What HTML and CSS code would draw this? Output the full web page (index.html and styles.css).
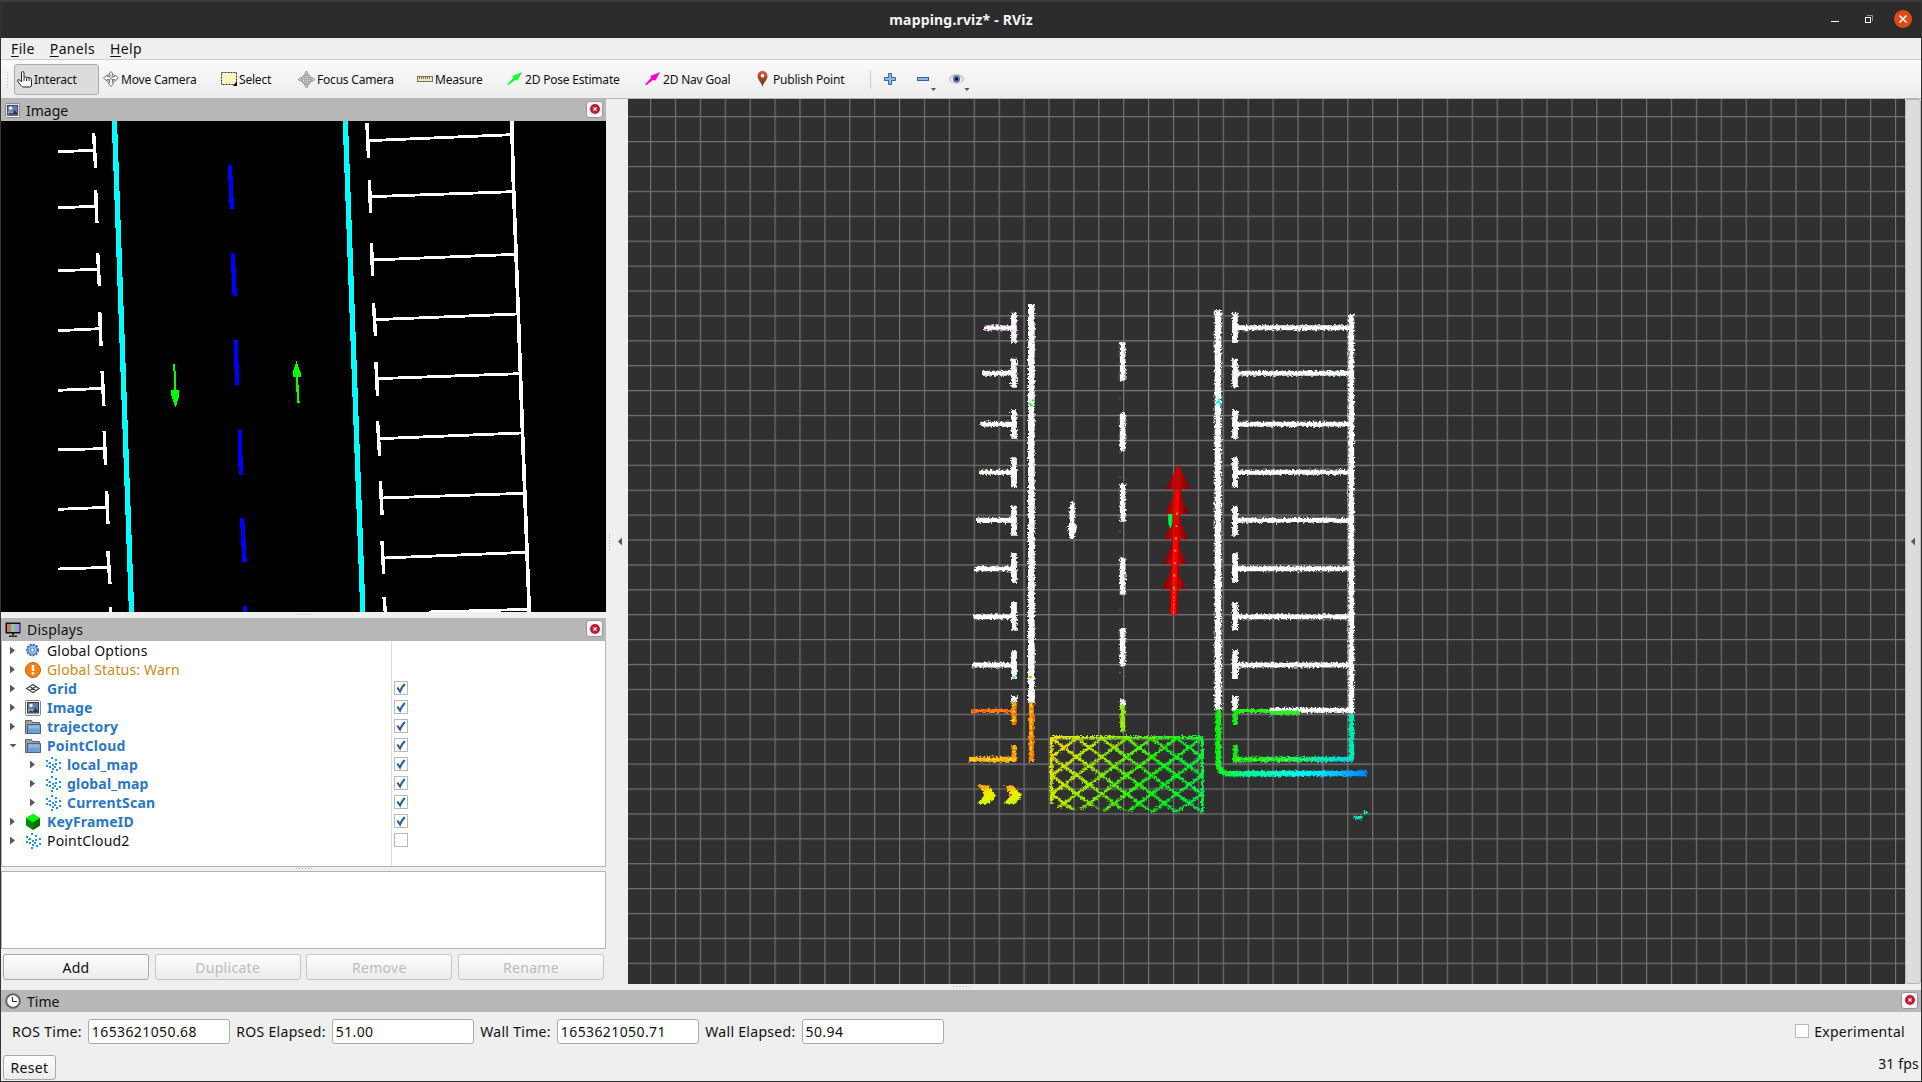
FILE: index.html
```html
<!DOCTYPE html>
<html lang="en">
<head>
<meta charset="utf-8">
<title>mapping.rviz* - RViz</title>
<link rel="stylesheet" href="styles.css">
</head>
<body>
<svg class="sprite" width="0" height="0">
  <symbol id="close" viewBox="0 0 10 10"><circle cx="5" cy="5" r="5" fill="#c61a32"/><path d="M3.4 3.4l3.2 3.2M6.6 3.4L3.4 6.6" stroke="#fff" stroke-width="1.2"/></symbol>
  <symbol id="picture" viewBox="0 0 16 16"><rect x=".5" y=".5" width="15" height="15" rx="1" fill="#f4f4f2" stroke="#85857f"/><rect x="2.5" y="2.5" width="11" height="10.500" fill="#5d7fac" stroke="#2c3b58"/><path d="M3 9h10v3.500H3z" fill="#8ea3bd"/><circle cx="6" cy="5.500" r="1.800" fill="#fdfbd0"/><path d="M3 12.500l2.500-2 2.500 1 2-4 3 3v2z" fill="#2e3a50"/></symbol>
  <symbol id="folder" viewBox="0 0 16 16"><path d="M.5 14.500v-13h6l1 2h7v11z" fill="#a0a09a" stroke="#62625e"/><path d="M2.500 14.500v-9h13v9z" fill="#729fcf" stroke="#3465a4"/><path d="M3.500 6.500h11v3h-11z" fill="#94b8df"/></symbol>
  <symbol id="cloud" viewBox="0 0 16 16"><path fill="#1c94ef" d="M6 0h2v2H6zM1 3h2v2H1zM4 5h2v2H4zM10 2h2v2h-2zM14 5h2v2h-2zM10 6h2v2h-2zM7 7h2v2H7zM1 8h2v2H1zM4 9h2v2H4zM9 9h2v2H9zM14 10h2v2h-2zM7 11h2v2H7zM11 12h2v2h-2zM6 14h2v2H6zM3 6h1v1H3z"/></symbol>
  <symbol id="check" viewBox="0 0 14 14"><path d="M3.300 6.500l2.700 4Q7.500 6.500 10.800 3" fill="none" stroke="#24609f" stroke-width="2.100"/></symbol>
</svg>
<div class="window">
  <header class="titlebar">
    <h1 class="title">mapping.rviz* - RViz</h1>
    <div class="controls">
      <svg width="9" height="9"><path d="M0 6.500h8" stroke="#fff"/></svg>
      <svg width="9" height="9"><rect x=".5" y="2.500" width="5" height="5" fill="none" stroke="#fff"/><path d="M2 .5h5.500V6" fill="none" stroke="#8c8c8c"/></svg>
      <svg width="18" height="18"><circle cx="9" cy="9" r="9" fill="#e04a17"/><path d="M5.500 5.500l7 7m0-7l-7 7" stroke="#fff" stroke-width="1.500"/></svg>
    </div>
  </header>

  <nav class="menubar">
    <span><u>F</u>ile</span><span><u>P</u>anels</span><span><u>H</u>elp</span>
  </nav>

  <div class="toolbar">
    <i class="grip"></i>
    <button class="tool active"><svg width="16" height="17" viewBox="0 0 16 17"><path d="M4.500 9V2q0-1.500 1.200-1.500T7 2v4.500q1.300-1.200 2.500 0 1.500-.8 2.500.3 2.500-.3 2.500 1.700V14q0 2-2 2h-6q-1.500 0-2.500-1.500L.5 10q0-2 2-1.200L4.500 11zM7 7v3m2.500-3v3M12 7v3" fill="#fff" stroke="#222"/></svg><span>Interact</span></button>
    <button class="tool"><svg width="16" height="16" viewBox="0 0 16 16"><path d="M8 .5l2.500 3H9v2h3V4l3.500 3L12 10V8.500H9.500V12h1.500L8 15.500 5 12h1.500V8.500H4V10L.5 7 4 4v1.500h3v-2H5.500z" fill="#fff" stroke="#777"/><path d="M4 4l8 7m0-7l-8 7" stroke="#888"/></svg><span>Move Camera</span></button>
    <button class="tool"><svg width="16" height="14" viewBox="0 0 16 14"><rect x=".5" y=".5" width="15" height="12" fill="#fdf5c0" stroke="#333" stroke-dasharray="2 1"/><path d="M16 9v5h-4z"/></svg><span>Select</span></button>
    <button class="tool"><svg width="17" height="17" viewBox="0 0 17 17"><circle cx="8.500" cy="8.500" r="5" fill="#ddd" stroke="#888"/><path d="M8.500 1v15M1 8.500h15M6.500 4v9M10.500 4v9M4 6.500h9M4 10.500h9" stroke="#999" stroke-width=".7"/><path d="M8.500 0l1.500 2v2H7V2zm0 17l1.500-2v-2H7v2zM0 8.500L2 7h2v3H2zm17 0L15 7h-2v3h2z" fill="#ccc" stroke="#888" stroke-width=".8"/></svg><span>Focus Camera</span></button>
    <button class="tool"><svg width="16" height="8" viewBox="0 0 16 8"><rect x=".5" y="1.500" width="15" height="5" fill="#eee8b8" stroke="#77735f"/><path d="M2.500 2v2m2-2v2m2-2v2m2-2v2m2-2v2m2-2v2" stroke="#777"/></svg><span>Measure</span></button>
    <button class="tool"><svg width="16" height="14" viewBox="0 0 16 14"><path d="M0 12.500L6 6 5.500 4 15 0 10.500 8.500 8 8l-6.500 5z" fill="#1f3"/></svg><span>2D Pose Estimate</span></button>
    <button class="tool"><svg width="16" height="14" viewBox="0 0 16 14"><path d="M0 12.500L6 6 5.500 4 15 0 10.500 8.500 8 8l-6.500 5z" fill="#f0c"/></svg><span>2D Nav Goal</span></button>
    <button class="tool pin"><svg width="11" height="16" viewBox="0 0 11 16"><defs><linearGradient id="pin" x1="0" y1="0" x2="0" y2="1"><stop stop-color="#e2583b"/><stop offset="1" stop-color="#5a3213"/></linearGradient></defs><path d="M5.500 16C4.500 11 .5 9 .5 5a5 5 0 0 1 10 0c0 4-4 6-5 11z" fill="url(#pin)"/><circle cx="5.500" cy="4.700" r="1.800" fill="#fff"/></svg><span>Publish Point</span></button>
    <i class="sep"></i>
    <svg class="plus" width="13" height="13"><path d="M4.500.5h3v4h4v3h-4v4h-3v-4h-4v-3h4z" fill="#8fb7e2" stroke="#3465a4"/></svg>
    <svg class="minus" width="32" height="20"><rect x=".5" y="8.500" width="11" height="3" fill="#8fb7e2" stroke="#3465a4"/><path d="M14 19h5l-2.500 3z" fill="#555"/></svg>
    <svg class="eye" width="22" height="20"><ellipse cx="7.500" cy="10" rx="7.500" ry="5" fill="#c9c9c9"/><ellipse cx="7.500" cy="10.500" rx="6" ry="3.500" fill="#eee"/><circle cx="7.500" cy="10" r="3.700" fill="#6478b8"/><circle cx="7.500" cy="10" r="1.700" fill="#112"/><path d="M15.500 19h5L18 22z" fill="#555"/></svg>
  </div>

  <main class="workspace">
    <aside class="docks">
      <section>
        <h2 class="dock-title"><svg width="15" height="15"><use href="#picture"/></svg><span>Image</span><b class="close"><svg width="10" height="10"><use href="#close"/></svg></b></h2>
        <svg class="camera" viewBox="2 63 1483 1473" preserveAspectRatio="none" shape-rendering="crispEdges" fill="none">
          <path stroke="#0ff" stroke-width="13" d="M280 63L322 1536M846 63L889 1536"/>
          <path stroke="#00f" stroke-width="10.500" d="M563 195L568 327M570 459L575 588M577 720L581 854M587 990L590 1125M593 1254L599 1385M600 1518V1536"/>
          <path stroke="#fff" stroke-width="8.500" d="M229 99L234 204M234 270L237 369M239 459L243 557M244 636L247 738M250 813L254 917M255 993L258 1094M261 1173L264 1272M264 1353L269 1452M270 1521V1536M899 69L903 174M905 240L908 339M910 429L913 528M915 609L920 708M921 786L925 888M925 963L930 1067M932 1143L936 1245M936 1323L940 1421M941 1491L944 1536"/>
          <path stroke="#fff" stroke-width="8.500" d="M142 155L230 151M142 323L235 319M142 512L240 508M142 692L245 686M142 871L251 865M142 1049L256 1046M142 1228L262 1222M142 1407L266 1402M901 122L1255 104M907 290L1259 275M911 480L1263 463M918 659L1267 642M923 836L1274 821M929 1016L1278 999M935 1194L1283 1180M940 1374L1289 1357M1050 1536L1297 1528"/>
          <path stroke="#fff" stroke-width="9" d="M1254 63L1258 250L1270 640L1281 1020L1297 1536"/>
          <path fill="#0f0" d="M424 792h5l3 78h7v15l-8 36h-2l-10-36v-15h8zM726 783l11 37v10h-7l4 79h-6l-4-79h-7v-13z"/>
        </svg>
      </section>
      <i class="hgrip"></i>
      <section>
        <h2 class="dock-title displays"><svg width="17" height="17" viewBox="0 0 17 17"><path d="M.5 1.500h15v11H.5z" fill="#111"/><path d="M2 3h4v8H2z" fill="#c77"/><path d="M6 3h4v8H6z" fill="#8c8"/><path d="M10 3h4.500v8H10z" fill="#99e"/><path d="M7 12h2v2H7zM4 14.500h8v1.500H4z" fill="#222"/></svg><span>Displays</span><b class="close"><svg width="10" height="10"><use href="#close"/></svg></b></h2>
        <ul class="tree">
          <li><i class="arrow"></i><svg width="16" height="16"><circle cx="7.500" cy="7" r="5.500" fill="#a5c3e6" stroke="#3d70b2" stroke-width="2" stroke-dasharray="2 1.200"/><circle cx="7.500" cy="7" r="4.600" fill="#a5c3e6" stroke="#4a7ab8"/><circle cx="7.500" cy="7" r="2" fill="#e8f0fa" stroke="#4a7ab8"/></svg><span>Global Options</span></li>
          <li class="warn"><i class="arrow"></i><svg width="16" height="16"><circle cx="8" cy="8" r="7.500" fill="#f5820d" stroke="#c8610a"/><path d="M8 3v6" stroke="#fff" stroke-width="2.400"/><circle cx="8" cy="11.500" r="1.400" fill="#fff"/></svg><span>Global Status: Warn</span></li>
          <li class="on"><i class="arrow"></i><svg width="16" height="16"><path d="M1.500 7.500L8 3.500l6 4-6 4zM4.700 5.500l6.300 4M11 5.500l-6.300 4" fill="none" stroke="#444" stroke-width="1.200"/></svg><span>Grid</span><b class="box"><svg width="14" height="14"><use href="#check"/></svg></b></li>
          <li class="on"><i class="arrow"></i><svg width="16" height="16"><use href="#picture"/></svg><span>Image</span><b class="box"><svg width="14" height="14"><use href="#check"/></svg></b></li>
          <li class="on"><i class="arrow"></i><svg width="16" height="16"><use href="#folder"/></svg><span>trajectory</span><b class="box"><svg width="14" height="14"><use href="#check"/></svg></b></li>
          <li class="on"><i class="arrow open"></i><svg width="16" height="16"><use href="#folder"/></svg><span>PointCloud</span><b class="box"><svg width="14" height="14"><use href="#check"/></svg></b></li>
          <li class="on child"><i class="arrow"></i><svg width="16" height="16"><use href="#cloud"/></svg><span>local_map</span><b class="box"><svg width="14" height="14"><use href="#check"/></svg></b></li>
          <li class="on child"><i class="arrow"></i><svg width="16" height="16"><use href="#cloud"/></svg><span>global_map</span><b class="box"><svg width="14" height="14"><use href="#check"/></svg></b></li>
          <li class="on child"><i class="arrow"></i><svg width="16" height="16"><use href="#cloud"/></svg><span>CurrentScan</span><b class="box"><svg width="14" height="14"><use href="#check"/></svg></b></li>
          <li class="on"><i class="arrow"></i><svg width="16" height="16"><path d="M8 0l7 4v7.500L8 16l-7-4.500V4z" fill="#058a05"/><path d="M8 0l7 4-7 4.500L1 4z" fill="#0f0"/><path d="M8 8.500l7-4.500v7.500L8 16z" fill="#017001"/></svg><span>KeyFrameID</span><b class="box"><svg width="14" height="14"><use href="#check"/></svg></b></li>
          <li><i class="arrow"></i><svg width="16" height="16"><use href="#cloud"/></svg><span>PointCloud2</span><b class="box"></b></li>
        </ul>
        <i class="hgrip tight"></i>
        <div class="description"></div>
        <div class="actions">
          <button class="btn">Add</button><button class="btn" disabled>Duplicate</button><button class="btn" disabled>Remove</button><button class="btn" disabled>Rename</button>
        </div>
      </section>
    </aside>
    <div class="splitter"><i class="vgrip"></i><i class="left"></i></div>
    <svg class="view" viewBox="628 99 1277 885">
      <defs>
        <pattern id="grid" x="650" y="116.100" width="24.900" height="24.900" patternUnits="userSpaceOnUse"><path d="M.6 0V24.900M0 .6H24.900" stroke="#a0a0a4" stroke-width="1.200"/></pattern>
        <pattern id="cross" x="410" y="1375" width="75" height="55.600" patternUnits="userSpaceOnUse"><path d="M-7.500-5.560L82.500 61.160M82.500-5.560L-7.500 61.160M-7.500 50L7.500 61.160M67.500-5.560L82.500 5.560" stroke="#fff" stroke-width="8"/></pattern>
        <mask id="hatch" maskUnits="userSpaceOnUse" x="320" y="1360" width="480" height="250">
          <g filter="url(#rough)">
            <path d="M334 1374H788V1598L768 1588 742 1575 712 1598 690 1590 640 1598 624 1590 560 1594 545 1587 494 1592 478 1590 462 1578 434 1588 395 1590 354 1584 346 1565H334z" fill="url(#cross)"/>
            <path d="M330 1372H790M334 1370V1571M787 1370V1600" stroke="#fff" stroke-width="8.500"/>
          </g>
        </mask>
        <linearGradient id="zone" gradientUnits="userSpaceOnUse" x1="330" y1="1370" x2="760" y2="1570"><stop stop-color="#fbe00a"/><stop offset=".25" stop-color="#b8f000"/><stop offset=".5" stop-color="#5cf505"/><stop offset=".7" stop-color="#10f80c"/><stop offset="1" stop-color="#00f448"/></linearGradient>
        <linearGradient id="curb" gradientUnits="userSpaceOnUse" x1="835" y1="1400" x2="1280" y2="1480"><stop stop-color="#0cf40c"/><stop offset=".2" stop-color="#00f88c"/><stop offset=".5" stop-color="#00ffe0"/><stop offset=".7" stop-color="#00e0ff"/><stop offset="1" stop-color="#0084ff"/></linearGradient>
        <linearGradient id="slot" gradientUnits="userSpaceOnUse" x1="880" y1="0" x2="1240" y2="0"><stop stop-color="#14ee14"/><stop offset=".4" stop-color="#20f040"/><stop offset=".75" stop-color="#00f0b0"/><stop offset="1" stop-color="#00c8e8"/></linearGradient>
        <linearGradient id="head" x1="0" x2="1" y1="0" y2="0"><stop stop-color="#800000"/><stop offset=".5" stop-color="#c80606"/><stop offset="1" stop-color="#7a0000"/></linearGradient>
        <linearGradient id="chev" x1="0" y1="0" x2=".5" y2="1"><stop stop-color="#ff8a00"/><stop offset=".5" stop-color="#ffe400"/><stop offset="1" stop-color="#c8ff00"/></linearGradient>
        <filter id="rough" filterUnits="userSpaceOnUse" x="60" y="40" width="1260" height="1600" color-interpolation-filters="sRGB"><feTurbulence type="fractalNoise" baseFrequency=".16" numOctaves="3" seed="4"/><feDisplacementMap in="SourceGraphic" scale="14" xChannelSelector="R" yChannelSelector="G"/></filter>
      </defs>
      <rect x="628" y="99" width="1277" height="885" fill="#303030"/>
      <rect x="628" y="99" width="1277" height="885" fill="url(#grid)" opacity=".58"/>
      <g transform="translate(940 280) scale(.33333)" fill="none">
        <g filter="url(#rough)">
          <path stroke="#fff" stroke-width="20" d="M274 72V1268M834 91V1290"/>
          <path stroke="#fff" stroke-width="17" d="M222 98V188M222 236V323M222 390V476M222 532V622M222 677V767M222 820V908M222 966V1052M222 1110V1197M222 1248V1265M885 98V188M885 236V323M885 390V476M885 532V622M885 677V767M885 820V908M885 966V1052M885 1110V1197M885 1248V1290M1234 104V1300M548 187V302M548 399V512M548 612V725M548 833V944M548 1044V1157M548 1258V1275"/>
          <path stroke="#fff" stroke-width="15" d="M132 144H222M126 280H222M121 433H222M117 577H222M111 721H222M105 866H222M100 1010H222M96 1155H222M885 143H1233M885 280H1233M885 433H1233M885 577H1233M885 721H1233M885 866H1233M885 1010H1233M885 1155H1233M988 1291H1240"/>
          <path fill="#fff" d="M397 661q9 12 9 40l-4 26 9 10q-2 20-10 40h-9q-7-18-9-38l8-12-3-26q0-28 9-40z"/>
          <g stroke-width="15">
            <path stroke="#ff8c0a" d="M274 1268V1446M222 1265V1335M222 1396V1446"/>
            <path stroke="#ff7a10" stroke-width="12" d="M93 1293H222"/>
            <path stroke="#ffb414" d="M87 1438H230"/>
            <path stroke="#ffe010" stroke-width="7" stroke-dasharray="9 12 4 17 13 9" d="M274 1272V1446M220 1270V1335M95 1440H228M224 1396V1440"/>
            <path stroke="#ff3c10" stroke-width="5" stroke-dasharray="6 23 9 31" d="M278 1280V1440M224 1300V1335M98 1292H222"/>
            <path stroke="#86f00a" d="M548 1275V1355"/>
            <path stroke="#d2e61e" stroke-width="7" stroke-dasharray="7 9 4 6" d="M546 1278V1355"/>
            <path stroke="#14f014" d="M886 1290V1335M886 1396V1446"/>
            <path stroke="#28f01e" stroke-width="12" d="M893 1293H988M988 1298H1080"/>
            <path stroke="url(#slot)" d="M880 1438H1241"/>
            <path stroke="#8ff020" stroke-width="5" stroke-dasharray="8 22 5 14" d="M890 1440H1130"/>
            <path stroke="#00ecb0" d="M1235 1300V1440"/>
            <path stroke="url(#curb)" stroke-width="17" d="M835 1290V1450Q837 1480 868 1481L1280 1480"/>
            <path stroke="#20c8ff" stroke-width="6" stroke-dasharray="7 26 5 18" d="M1130 1440H1235"/>
          </g>
          <path fill="#00e8c0" d="M1240 1607h28v6l-8 5h-14zM1271 1593h10v8h-10z"/>
          <g fill="url(#chev)"><path d="M115 1515l27 1 27 29-21 26h-37l22-25z"/><path d="M192 1515h25l29 30-20 26h-35l22-26z"/></g>
        </g>
        <g mask="url(#hatch)">
          <path fill="url(#zone)" d="M320 1360H800V1610H320z"/>
          <path stroke="#ffb400" stroke-width="7" stroke-dasharray="12 38 7 61 4 22" d="M340 1390L400 1440M370 1403L600 1395L760 1410M335 1430L520 1440L730 1445"/>
          <path stroke="#f42a10" stroke-width="4" stroke-dasharray="4 61 3 83" d="M340 1415H780M340 1520L700 1530M785 1400V1600"/>
          <path stroke="#a4f000" stroke-width="4" stroke-dasharray="5 14 3 21" d="M340 1374H780M334 1400V1570M340 1480H700M400 1550H600"/>
        </g>
        <g stroke-width="3">
          <path stroke="#0e4" stroke-dasharray="4 71 3 109 5 44" d="M265 180V1200M843 330V1240M540 280V1200"/>
          <path stroke="#0bf" stroke-dasharray="3 93 4 131" d="M843 140V1200M1241 200V1250"/>
          <path stroke="#0aa" stroke-dasharray="5 42 3 67 4 22" d="M900 287H1225M900 440H1225M900 570H1225M900 714H1225M895 274H1200"/>
          <path stroke="#9e0" stroke-dasharray="5 31 3 24" d="M122 427V440M118 572V584M113 715H210M120 584H210"/>
          <path stroke="#f0f" stroke-dasharray="6 16" d="M132 139H145M133 150H205M230 130V180"/>
          <path stroke="#0f4" stroke-width="5" d="M266 372h8M276 361h7M270 376h8M217 1193h8"/>
          <path stroke="#0fd" stroke-width="7" d="M828 367h14M834 359h6M838 375h6"/>
          <path stroke="#fa0" stroke-width="7" d="M267 1191h9"/>
        </g>
        <path fill="url(#head)" d="M702 853L738 928H666zM705 778L741 853H669zM708 700L745 778H672zM711 627L748 702H675z"/>
        <path d="M684 702h15l1 20-9 24-6-15z" fill="#00f050"/>
        <path stroke="#b00000" stroke-width="24" d="M712 625L700 1004"/><path stroke="#f00" stroke-width="14" d="M712 625L700 1004"/>
        <path fill="url(#head)" d="M715 553L750 627H677z"/><path fill="#c00" opacity=".8" d="M708 702L727 778H690zM705 788L722 853H688z"/><path stroke="#f00" stroke-width="13" d="M707 770L700 1004"/>
        <path stroke="#ffb400" stroke-width="5" stroke-dasharray="6 32 5 31 7 30" d="M711 698L701 930"/><path stroke="#ffb400" stroke-width="3" stroke-dasharray="7 5 3 8" d="M703 925L700 1004"/>
      </g>
      <rect x="1000" y="290" width="370" height="480" fill="url(#grid)" opacity=".14"/>
    </svg>
    <div class="right-bar"><i class="left"></i></div>
  </main>

  <footer class="time">
    <i class="hgrip time-grip"></i>
    <h2 class="dock-title"><svg width="16" height="16"><circle cx="8" cy="8" r="6.800" fill="#fff" stroke="#666" stroke-width="2"/><path d="M7.500 4v4.500H12" fill="none" stroke="#333" stroke-width="1.200"/></svg><span>Time</span><b class="close"><svg width="10" height="10"><use href="#close"/></svg></b></h2>
    <div class="fields">
      <label><span>ROS Time:</span><div class="input">1653621050.68</div></label>
      <label><span>ROS Elapsed:</span><div class="input">51.00</div></label>
      <label><span>Wall Time:</span><div class="input">1653621050.71</div></label>
      <label><span>Wall Elapsed:</span><div class="input">50.94</div></label>
      <label class="experimental"><b class="box"></b><span>Experimental</span></label>
    </div>
    <div class="status"><button class="btn">Reset</button><span>31 fps</span></div>
  </footer>
</div>
</body>
</html>
```
FILE: styles.css
```css
* { box-sizing: border-box; }
body { margin: 0; background: #333; font: 14px/19px "Noto Sans", "Open Sans", sans-serif; letter-spacing: .18px; color: #111; }
.sprite { position: absolute; }
svg { display: block; flex: none; }
span { white-space: nowrap; }
h1, h2, ul { margin: 0; padding: 0; font-weight: normal; list-style: none; }
button { font: inherit; color: inherit; letter-spacing: inherit; }
i, b { flex: none; }
.window { width: 1922px; height: 1082px; padding: 0 1px 1px; display: flex; flex-direction: column; background: #333; overflow: hidden; }
.window > * { flex: none; }

.titlebar { height: 38px; padding-bottom: 2px; display: flex; align-items: center; justify-content: center; position: relative; background: #2c2c2c; border-top: 2px solid #3b3b3b; }
.title { font-size: 14px; font-weight: 700; color: #f5f5f5; }
.controls { position: absolute; right: 9px; top: 0; height: 34px; display: flex; align-items: center; gap: 25px; }
.controls svg:last-child { margin-left: -5px; }

.menubar { height: 22px; padding-left: 10px; display: flex; align-items: center; gap: 15px; background: #efefef; border-bottom: 1px solid #ccc; letter-spacing: .35px; }
.menubar u { text-underline-offset: 2px; }

.toolbar { height: 39px; display: grid; grid-template-columns: 13px 89px 118px 77px 119px 90px 138px 110px 115px 14px 33px 32px 30px; align-items: center; background: linear-gradient(#fafafa, #ededed); border-bottom: 1px solid #b4b4b4; box-shadow: inset 0 -1px #eee; font-size: 12px; letter-spacing: -.2px; }
.grip { width: 4px; height: 17px; margin-left: 5px; background: radial-gradient(circle, #bbb 30%, transparent 40%) 0 0 / 3px 3px; }
.tool { height: 31px; padding: 0; display: flex; align-items: center; gap: 2px; background: none; border: 0; }
.tool.active { width: 85px; padding-left: 2px; gap: 1px; background: #dcdcdc; border: 1px solid #ababab; border-radius: 3px; }
.tool.pin { gap: 5px; padding-left: 2px; }
.sep { width: 1px; height: 19px; background: #ccc; }
.minus, .eye { overflow: visible; }

.workspace { height: 885px; display: flex; background: #efefef; }
.docks { width: 605px; display: flex; flex-direction: column; }
.dock-title { height: 22px; padding: 0 3px 0 4px; display: flex; align-items: center; gap: 7px; background: #b7b7b7; font-size: 14px; letter-spacing: 0; }
.dock-title span { margin-left: -1px; }
.displays { height: 23px; gap: 6px; letter-spacing: .2px; }
.close { width: 17px; height: 17px; margin: 0 0 2px auto; display: grid; place-items: center; background: #f6f6f6; border: 1px solid #999; border-radius: 3px; }
.camera { width: 605px; height: 491px; background: #000; }
.hgrip { height: 6px; margin: 0 294px; background: linear-gradient(90deg, #b5b5b5 1px, transparent 1px) center 2px / 3px 1px repeat-x; }
.tree { height: 226px; border: 1px solid #b4b4b4; border-top: 0; background: linear-gradient(#ddd, #ddd) 389px 0 / 1px 100% no-repeat #fff; }
.tree li { height: 19px; padding-left: 8px; display: flex; align-items: center; position: relative; }
.tree li > svg { margin: 0 6px 0 10px; }
.tree .child { padding-left: 28px; }
.tree .on { color: #2a77c5; font-weight: 700; }
.tree .warn { color: #cb8a14; }
.arrow { width: 5px; height: 8px; background: #5a5a5a; clip-path: polygon(0 0, 100% 50%, 0 100%); }
.arrow.open { width: 8px; height: 4px; margin: 0 -2px 0 -1px; clip-path: polygon(0 0, 100% 0, 50% 100%); }
.box { width: 14px; height: 14px; background: #fff; box-shadow: inset 0 0 0 1px #b9b9b9; }
.tree .box { position: absolute; left: 392px; top: 2px; }
.tight { display: block; height: 4px; background-position: center 1px; }
.description { height: 78px; background: #fff; border: 1px solid #b4b4b4; }
.actions { padding: 5px 2px 0; display: grid; grid-template-columns: repeat(4, 146px); justify-content: space-between; }
.btn { height: 26px; padding: 0; display: grid; place-items: center; background: linear-gradient(#fefefe, #ebebeb); border: 1px solid #a9a9a9; border-radius: 3px; letter-spacing: .3px; }
.btn:disabled { color: #bcbcbc; border-color: #c6c6c6; }
.splitter { width: 22px; display: flex; align-items: center; justify-content: space-between; padding: 0 6px 0 3px; }
.vgrip { width: 1px; height: 16px; background: linear-gradient(#b0b0b0 1px, transparent 1px) 0 0 / 1px 3px; }
.left { width: 4px; height: 8px; background: #555; clip-path: polygon(100% 0, 0 50%, 100% 100%); }
.view { width: 1277px; height: 885px; }
.right-bar { width: 16px; display: grid; place-items: center; background: #dcdcdc; border: 1px solid #b5b5b5; border-radius: 3px; }

.time { height: 97px; display: flex; flex-direction: column; background: #efefef; }
.time-grip { margin: 0 952px; }
.fields { height: 38px; padding: 0 16px 0 11px; display: flex; align-items: center; gap: 6.5px; letter-spacing: .3px; }
.fields label { display: flex; align-items: center; gap: 6px; }
.fields .input { width: 142px; height: 25px; padding: 2px 0 0 3px; background: #fff; border: 1px solid #ababab; border-radius: 3px; letter-spacing: .4px; }
.fields .experimental { margin-left: auto; gap: 5px; }
.status { margin-top: 5px; padding: 0 1px 0 2px; display: flex; align-items: center; justify-content: space-between; }
.status .btn { width: 53px; height: 25px; }
.status span { margin: -8px 1px 0 0; }
```
